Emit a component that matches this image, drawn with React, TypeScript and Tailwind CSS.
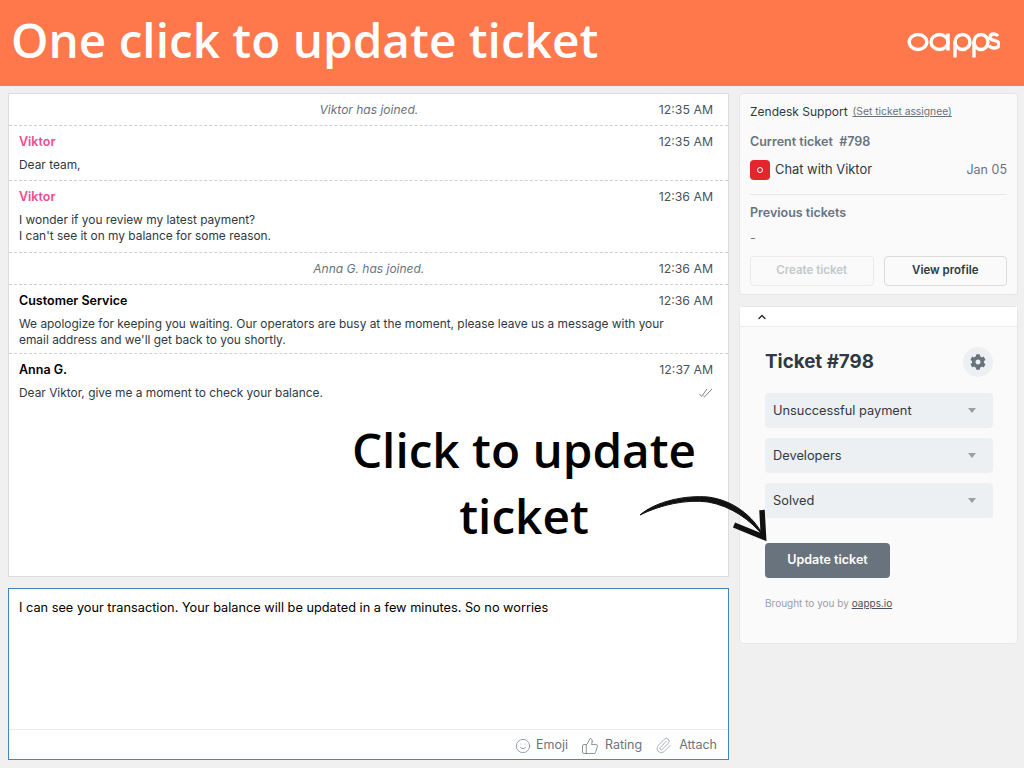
import { ChevronUp, Smile, ThumbsUp, Paperclip } from "lucide-react";
import { FaCog } from "react-icons/fa";

const Logo = () => (
  <svg width="94" height="34" viewBox="0 0 94 34" fill="none" stroke="white" strokeWidth="3.4">
    <ellipse cx="12" cy="14" rx="8.800" ry="7.500" />
    <ellipse cx="33.500" cy="14" rx="8.500" ry="7.500" />
    <path d="M42 5.500v17" />
    <ellipse cx="56.500" cy="14" rx="7.500" ry="7.500" />
    <path d="M49 14v15.500" />
    <ellipse cx="75" cy="14" rx="7" ry="7.500" />
    <path d="M68 14v15.500" />
    <path d="M92 8c-1-1.300-2.500-2-4-2-2.500 0-4 1-4 3.500 0 4 9 1.500 9 6.500 0 2.500-2 4-5 4-2 0-4-.8-5-2.500" />
  </svg>
);

const Arrow = () => (
  <svg width="130" height="60" viewBox="0 0 130 60" fill="none" className="absolute left-[638px] top-[490px]">
    <path d="M2 25C18 11 48 5 70 7c24 3 45 18 56 40-13-17-33-31-56-35C48 9 22 15 2 25z" fill="#111" stroke="#111" strokeWidth="1" strokeLinejoin="round" />
    <path d="M124 20l1.500 27L96 35" stroke="#111" strokeWidth="5.500" strokeLinejoin="miter" />
  </svg>
);

const Check = () => (
  <svg width="14" height="10" viewBox="0 0 14 10" fill="none" stroke="#6b7280" strokeWidth="0.9">
    <path d="M0.500 6l2 2.500L8 1" />
    <path d="M4.500 8l1 0.800L13 1" />
  </svg>
);

const Notice = ({ text, time, cls }: { text: string; time: string; cls: string }) => (
  <div className={`flex items-center border-b border-dashed border-[#cfcfcf] pl-[10px] pr-[15px] ${cls}`}>
    <div className="flex-1 text-center italic text-[12px] text-[#68737d] pl-[60px] pt-[1px]">{text}</div>
    <div className="text-[12.3px] text-[#49545c] pt-[1px]">{time}</div>
  </div>
);

const Message = ({
  name,
  time,
  lines,
  nameCls,
  check,
}: {
  name: string;
  time: string;
  lines: string[];
  nameCls: string;
  check?: boolean;
}) => (
  <div className="flex flex-col pl-[10px] pr-[15px] pt-[7px]">
    <div className="flex justify-between items-center h-[18px]">
      <span className={`font-semibold ${nameCls}`}>{name}</span>
      <span className="text-[12.3px] text-[#49545c]">{time}</span>
    </div>
    <div className="flex justify-between items-start mt-[6px] text-[11.9px] text-[#2f3941] leading-[16px]">
      <div>
        {lines.map((l) => (
          <div key={l}>{l}</div>
        ))}
      </div>
      {check && <div className="mt-[3px]"><Check /></div>}
    </div>
  </div>
);

const Select = ({ label }: { label: string }) => (
  <div className="flex items-center justify-between h-[35px] rounded bg-[#edf0f3] pl-2 pr-[17px] text-[12.8px] text-[#2f3941]">
    <span>{label}</span>
    <span className="w-0 h-0 border-x-[4px] border-x-transparent border-t-[5px] border-t-[#999fa5]" />
  </div>
);

export default function App() {
  return (
    <div className="relative w-[1024px] h-[768px] overflow-hidden bg-[#f0f0f0] font-['Inter',sans-serif] text-[12.5px]">
      <header className="flex items-center justify-between h-[86px] bg-[#ff784c] pl-[11px] pr-6">
        <h1 className="font-['Open_Sans',sans-serif] font-semibold text-[47.7px] text-white leading-none pb-[6px]">One click to update ticket</h1>
        <div className="pt-[4px]"><Logo /></div>
      </header>

      <main className="flex gap-[10px] pl-2 pt-[7px]">
        <div className="flex flex-col w-[721px] gap-[11px]">
          <section className="h-[484px] bg-white border border-[#dcdcdc]">
            <Notice text="Viktor has joined." time="12:35 AM" cls="h-[32px]" />
            <div className="h-[55px] border-b border-dashed border-[#cfcfcf]">
              <Message name="Viktor" time="12:35 AM" lines={["Dear team,"]} nameCls="text-[#ee4b8f]" />
            </div>
            <div className="h-[72px] border-b border-dashed border-[#cfcfcf]">
              <Message
                name="Viktor"
                time="12:36 AM"
                lines={["I wonder if you review my latest payment?", "I can't see it on my balance for some reason."]}
                nameCls="text-[#ee4b8f]"
              />
            </div>
            <Notice text="Anna G. has joined." time="12:36 AM" cls="h-[32px]" />
            <div className="h-[69px] border-b border-dashed border-[#cfcfcf]">
              <Message
                name="Customer Service"
                time="12:36 AM"
                lines={[
                  "We apologize for keeping you waiting. Our operators are busy at the moment, please leave us a message with your",
                  "email address and we'll get back to you shortly.",
                ]}
                nameCls="text-black"
              />
            </div>
            <Message
              name="Anna G."
              time="12:37 AM"
              lines={["Dear Viktor, give me a moment to check your balance."]}
              nameCls="text-black"
              check
            />
          </section>

          <section className="flex flex-col h-[172px] bg-white border border-[#3f86c6]">
            <div className="flex-1 px-[10px] pt-[9px] text-[12.75px] text-black">
              I can see your transaction. Your balance will be updated in a few minutes. So no worries
            </div>
            <div className="flex items-center justify-end gap-[13px] h-[30px] border-t border-[#e9ebed] pr-[11px] pt-[2px] text-[#68737d]">
              <span className="flex items-center gap-[5px]"><Smile size={16} strokeWidth={1} />Emoji</span>
              <span className="flex items-center gap-[6px]"><ThumbsUp size={18} strokeWidth={1} />Rating</span>
              <span className="flex items-center gap-[7px]"><Paperclip size={17} strokeWidth={1} className="text-[#8a9299]" />Attach</span>
            </div>
          </section>
        </div>

        <aside className="flex flex-col w-[279px] gap-[11px]">
          <section className="h-[202px] rounded-sm bg-[#fafafa] border border-[#e6e6e6] px-[10px] pt-[11px] text-[#2f3941]">
            <div className="flex items-center gap-[5px] h-[14px]">
              <span className="text-[12px]">Zendesk Support</span>
              <span className="underline text-[10.3px] text-[#68737d]">(Set ticket assignee)</span>
            </div>
            <div className="mt-[16px] font-semibold text-[#68737d] h-[14px] leading-[14px]">Current ticket&nbsp; #798</div>
            <div className="flex items-center mt-[11px] h-[20px]">
              <span className="flex items-center justify-center w-5 h-5 rounded-sm bg-[#e3262e] mr-[5px]">
                <span className="w-[6px] h-[6px] rounded-full border-[1.5px] border-white" />
              </span>
              <span className="flex-1 text-[12.9px]">Chat with Viktor</span>
              <span className="text-[#68737d]">Jan 05</span>
            </div>
            <div className="h-px bg-[#e6e8ea] mt-[14px]" />
            <div className="mt-[11px] font-semibold text-[#68737d] h-[14px] leading-[14px]">Previous tickets</div>
            <div className="mt-[11px] text-[#68737d] h-[14px] leading-[14px]">-</div>
            <div className="flex gap-[10px] mt-[11px]">
              <button className="flex-1 h-[30px] rounded-sm border border-[#e9ebed] text-[11.5px] font-semibold text-[#c2c8cc]">Create ticket</button>
              <button className="flex-1 h-[30px] rounded-sm border border-[#d8dcde] text-[11.5px] font-semibold text-[#2f3941]">View profile</button>
            </div>
          </section>

          <section className="h-[338px] rounded-sm bg-[#fafafa] border border-[#e6e6e6]">
            <div className="flex items-center h-[20px] pl-[16px] bg-white border-b border-[#ebebeb]">
              <ChevronUp size={12} strokeWidth={2.5} className="text-[#222]" />
            </div>
            <div className="pl-[25px] pr-[24px] pt-[20px]">
              <div className="flex items-center justify-between h-[30px]">
                <h2 className="font-bold text-[18.8px] text-[#2f3941] pt-[1px]">Ticket #798</h2>
                <span className="flex items-center justify-center w-[30px] h-[30px] rounded-full bg-[#edf0f3]">
                  <FaCog size={16} className="text-[#68737d]" />
                </span>
              </div>
              <div className="flex flex-col gap-[10px] mt-[16px]">
                <Select label="Unsuccessful payment" />
                <Select label="Developers" />
                <Select label="Solved" />
              </div>
              <button className="w-[125px] h-[35px] mt-[25px] rounded bg-[#68737d] text-white text-[12.5px] font-semibold">Update ticket</button>
              <div className="mt-[18px] text-[10px] text-[#999fa5]">
                Brought to you by <span className="underline text-[#49545c]">oapps.io</span>
              </div>
            </div>
          </section>
        </aside>
      </main>

      <div className="absolute left-[340px] top-[417px] w-[368px] text-center font-['Open_Sans',sans-serif] font-semibold text-[47.7px] leading-[66px] text-black">
        Click to update ticket
      </div>
      <Arrow />
    </div>
  );
}
